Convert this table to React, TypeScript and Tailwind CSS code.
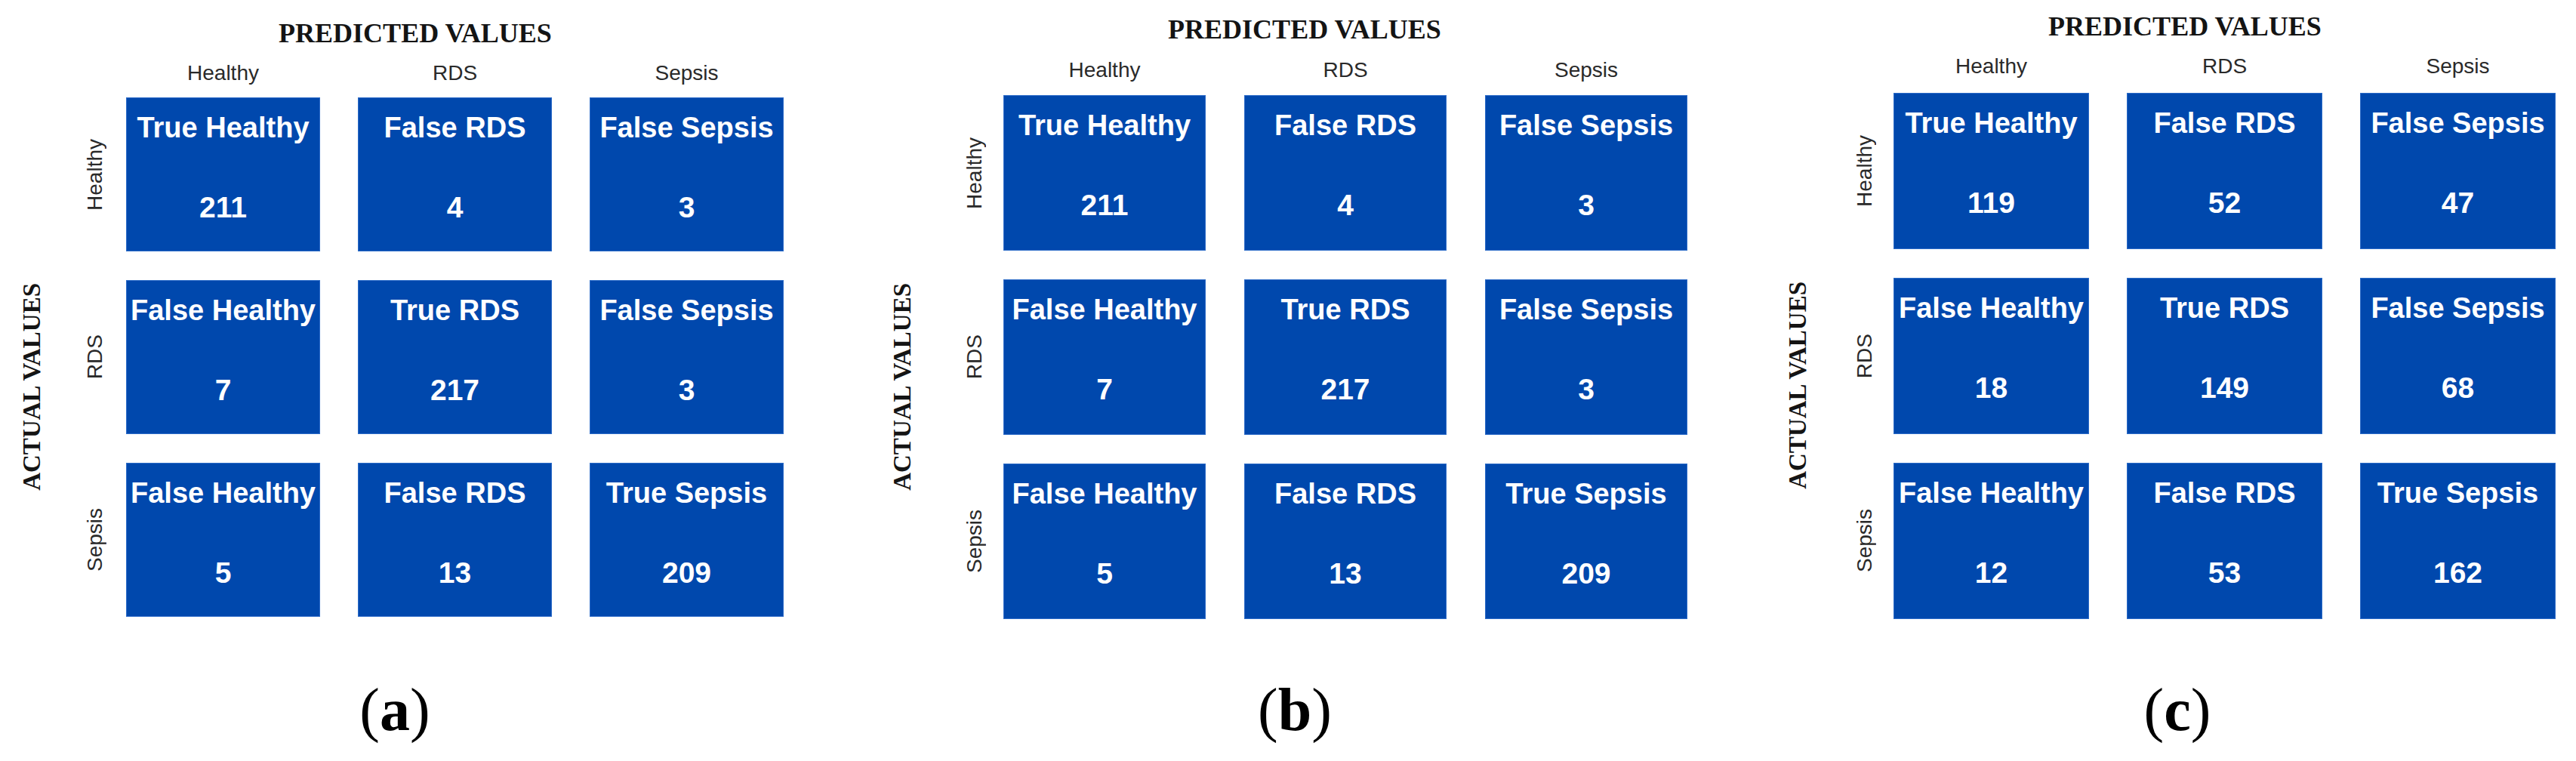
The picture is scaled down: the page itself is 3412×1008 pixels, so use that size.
import clsx from "clsx";

type Panel = {
  label: string;
  values: number[][];
  panelW: string;
  padTop: string;
  titleShift: string;
  headTop: string;
  headGap: string;
  headSpacer: string;
  padLeft: string;
  axisW: string;
  rowW: string;
  cellW: string;
  cellH: string;
  colGap: string;
  labelTop: string;
  labelShift: string;
};

const classes = ["Healthy", "RDS", "Sepsis"];

const cellTitles = [
  ["True Healthy", "False RDS", "False Sepsis"],
  ["False Healthy", "True RDS", "False Sepsis"],
  ["False Healthy", "False RDS", "True Sepsis"],
];

const panels: Panel[] = [
  {
    label: "a",
    values: [
      [211, 4, 3],
      [7, 217, 3],
      [5, 13, 209],
    ],
    panelW: "w-[1100px]",
    padTop: "pt-[26px]",
    titleShift: "",
    headTop: "mt-[21px]",
    headGap: "mb-[18px]",
    headSpacer: "h-[46px]",
    padLeft: "pl-0",
    axisW: "w-[84px]",
    rowW: "w-[83px]",
    cellW: "w-[257px]",
    cellH: "h-[204px]",
    colGap: "gap-x-[50px]",
    labelTop: "mt-[83px]",
    labelShift: "pr-[54px]",
  },
  {
    label: "b",
    values: [
      [211, 4, 3],
      [7, 217, 3],
      [5, 13, 209],
    ],
    panelW: "w-[1230px]",
    padTop: "pt-[21px]",
    titleShift: "pl-[26px]",
    headTop: "mt-[22px]",
    headGap: "mb-[19px]",
    headSpacer: "h-[47px]",
    padLeft: "pl-[37px]",
    axisW: "w-[116px]",
    rowW: "w-[76px]",
    cellW: "w-[268px]",
    cellH: "h-[206px]",
    colGap: "gap-x-[51px]",
    labelTop: "mt-[80px]",
    labelShift: "",
  },
  {
    label: "c",
    values: [
      [119, 52, 47],
      [18, 149, 68],
      [12, 53, 162],
    ],
    panelW: "w-[1082px]",
    padTop: "pt-[17px]",
    titleShift: "pl-[46px]",
    headTop: "mt-[21px]",
    headGap: "mb-[21px]",
    headSpacer: "h-[49px]",
    padLeft: "pl-0",
    axisW: "w-[102px]",
    rowW: "w-[76px]",
    cellW: "w-[259px]",
    cellH: "h-[207px]",
    colGap: "gap-x-[50px]",
    labelTop: "mt-[80px]",
    labelShift: "pl-[26px]",
  },
];

function Cell({ title, value, p }: { title: string; value: number; p: Panel }) {
  return (
    <div
      className={clsx(
        "flex shrink-0 flex-col items-center border border-[#2c6cc8] bg-[#0048ad] text-white font-['Liberation_Sans',Arial,sans-serif] font-bold",
        p.cellW,
        p.cellH
      )}
    >
      <span className="pt-[20px] text-[38px] leading-none whitespace-nowrap">{title}</span>
      <span className="mt-[67px] text-[39px] leading-none">{value}</span>
    </div>
  );
}

function Matrix({ p }: { p: Panel }) {
  return (
    <div className={clsx("flex shrink-0 flex-col", p.panelW, p.padTop)}>
      {/* Title */}
      <h2
        className={clsx(
          "text-center font-['Liberation_Serif','Times_New_Roman',serif] text-[36px] font-bold leading-none text-[#141414]",
          p.titleShift
        )}
      >
        PREDICTED VALUES
      </h2>

      <div className={clsx("flex", p.padLeft, p.headTop)}>
        {/* Actual values axis */}
        <div className={clsx("flex shrink-0 flex-col", p.axisW)}>
          <div className={p.headSpacer} />
          <div className="flex flex-1 items-center justify-center pt-[78px]">
            <span className="rotate-180 whitespace-nowrap font-['Liberation_Serif','Times_New_Roman',serif] text-[33px] font-bold leading-none text-[#141414] [writing-mode:vertical-rl]">
              ACTUAL VALUES
            </span>
          </div>
        </div>

        <div className="flex flex-col">
          {/* Column headers */}
          <div className={clsx("flex", p.headGap)}>
            <div className={clsx("shrink-0", p.rowW)} />
            <div className={clsx("flex", p.colGap)}>
              {classes.map((c) => (
                <div
                  key={c}
                  className={clsx(
                    "shrink-0 text-center font-['Liberation_Sans',Arial,sans-serif] text-[28px] leading-none text-[#2a2a2a]",
                    p.cellW
                  )}
                >
                  {c}
                </div>
              ))}
            </div>
          </div>

          {/* Rows */}
          <div className="flex flex-col gap-y-[38px]">
            {classes.map((c, r) => (
              <div key={c} className="flex">
                <div className={clsx("flex shrink-0 items-center justify-center", p.rowW)}>
                  <span className="rotate-180 whitespace-nowrap font-['Liberation_Sans',Arial,sans-serif] text-[28px] leading-none text-[#2a2a2a] [writing-mode:vertical-rl]">
                    {c}
                  </span>
                </div>
                <div className={clsx("flex", p.colGap)}>
                  {cellTitles[r].map((t, i) => (
                    <Cell key={i} title={t} value={p.values[r][i]} p={p} />
                  ))}
                </div>
              </div>
            ))}
          </div>
        </div>
      </div>

      {/* Sub-figure label */}
      <div
        className={clsx(
          "text-center font-['Liberation_Serif','Times_New_Roman',serif] text-[80px] leading-none text-black",
          p.labelTop,
          p.labelShift
        )}
      >
        (<b>{p.label}</b>)
      </div>
    </div>
  );
}

export default function App() {
  return (
    <div className="flex h-[1008px] w-[3412px] overflow-hidden bg-white">
      {panels.map((p) => (
        <Matrix key={p.label} p={p} />
      ))}
    </div>
  );
}
